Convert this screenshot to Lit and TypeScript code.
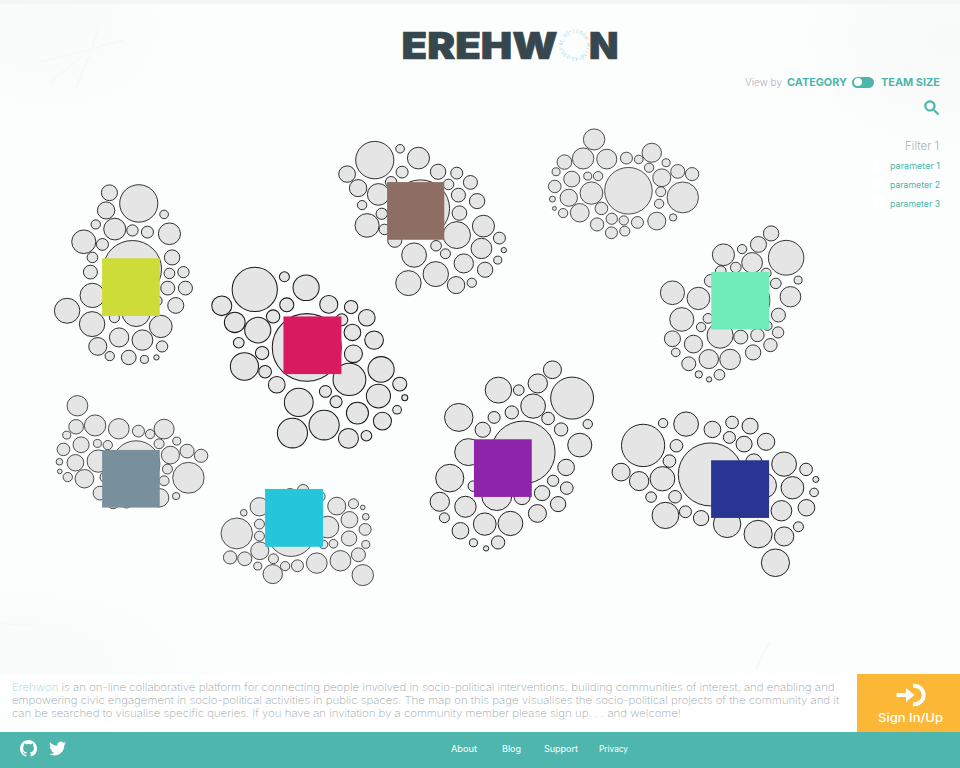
import { LitElement, html, svg, css } from "lit";
import { customElement, property } from "lit/decorators.js";

type Bubble = [number, number, number];
interface Cluster {
  x: number;
  y: number;
  stroke: number;
  square?: { x: number; y: number; w: number; h: number; color: string };
  bubbles: Bubble[];
}

// Bubble coordinates are on a grid three times finer than the page.
const clusters: Cluster[] = [
  {
    x: 40, y: 170, stroke: 2.7,
    square: { x: 186, y: 264.5, w: 173, h: 173, color: "#cddc39" },
    bubbles: [[208,68,24],[296,100,57],[198,121,26],[372,133,13],[167,163,14],[224,177,33],[277,181,17],[322,186,18],[388,191,33],[131,215,36],[187,223,18],[277,297,87],[157,262,16],[396,262,23],[151,306,21],[388,310,16],[430,306,17],[157,376,37],[383,354,21],[436,354,21],[81,422,38],[350,392,16],[407,406,24],[156,462,38],[223,443,15],[288,428,42],[362,469,34],[173,529,27],[237,502,29],[307,510,31],[366,529,17],[209,558,14],[266,562,22],[313,568,12],[349,562,8]],
  },
  {
    x: 200, y: 255, stroke: 3.1,
    square: { x: 250, y: 184, w: 174, h: 173, color: "#d81b60" },
    bubbles: [[164,103,67.5],[253,65,15],[318,98,39],[65,152,30],[260,149,21],[386,148,27],[453,156,20],[500,188,25],[104,202,31],[219,184,20],[425,194,18],[173,225,39],[457,232,25],[522,255,28],[116,263,16],[320,277,103],[186,294,20],[460,296,27],[133,334,42],[195,350,19],[448,373,49],[543,343,39],[230,389,25],[376,409,18],[599,387,21],[296,442,43],[408,440,18],[535,423,36],[614,428,9],[591,464,13],[472,474,33],[547,498,27],[372,510,45],[277,534,45],[445,550,30],[499,542,16]],
  },
  {
    x: 330, y: 120, stroke: 2.7,
    square: { x: 171, y: 186, w: 171.5, h: 173, color: "#8d6e63" },
    bubbles: [[134,120,57],[210,86,13],[265,114,33],[51,162,25],[216,156,18],[324,155,23],[380,159,18],[421,187,21],[84,204,26],[183,186,17],[355,193,16],[145,223,33],[385,225,21],[441,243,23],[96,255,14],[271,265,87],[155,281,17],[388,279,22],[111,316,36],[163,328,16],[380,345,41],[460,318,33],[194,361,21],[318,377,16],[508,354,18],[252,405,37],[346,401,15],[454,385,31],[521,390,8],[503,420,12],[401,430,29],[465,449,23],[317,462,38],[235,489,38],[378,495,26],[425,488,14]],
  },
  {
    x: 535, y: 120, stroke: 2.3,
    bubbles: [[177,58,32],[144,115,32],[215,117,30],[88,126,22],[63,155,12],[274,114,18],[311,118,13],[350,98,29],[342,143,14],[393,128,12],[380,173,27],[428,154,21],[471,162,20],[110,177,24],[158,168,12],[189,168,14],[59,199,19],[52,237,9],[101,233,26],[169,219,34],[280,212,71],[377,215,15],[443,232,47],[372,251,14],[199,265,19],[134,278,28],[84,279,14],[58,265,6],[230,296,17],[266,301,14],[307,307,18],[186,313,20],[365,303,27],[414,292,11],[229,338,18],[269,333,15]],
  },
  {
    x: 650, y: 215, stroke: 2.6,
    square: { x: 183.5, y: 170.5, w: 174, h: 172.5, color: "#6eebb8" },
    bubbles: [[363,55,23],[325,88,24],[220,119,33],[276,102,14],[306,143,31],[408,128,53],[257,157,16],[212,168,16],[348,174,15],[444,195,12],[377,205,16],[182,197,19],[67,233,36],[145,250,34],[421,245,31],[280,256,79],[95,313,36],[174,310,15],[153,336,14],[385,300,21],[352,332,14],[384,352,17],[67,371,24],[210,361,39],[272,366,21],[322,360,20],[130,387,27],[361,390,20],[77,412,13],[309,412,23],[176,432,29],[240,433,31],[116,446,21],[146,478,11],[177,493,8],[208,479,16]],
  },
  {
    x: 40, y: 385, stroke: 2.3,
    square: { x: 186, y: 194.5, w: 173, h: 173, color: "#78909c" },
    bubbles: [[112,62,31],[108,125,22],[165,121,32],[236,131,31],[80,150,12],[295,138,18],[330,147,14],[372,132,30],[410,168,12],[123,179,24],[172,175,12],[203,180,14],[357,176,15],[70,193,19],[288,237,71],[391,210,27],[441,198,21],[483,212,20],[58,230,10],[106,233,25],[175,228,34],[382,252,15],[59,259,7],[83,276,14],[133,281,28],[445,278,47],[199,276,19],[372,287,15],[180,324,21],[358,338,28],[408,333,11],[219,353,18],[259,354,15]],
  },
  {
    x: 210, y: 475, stroke: 2.3,
    square: { x: 165, y: 41.5, w: 174, h: 173.5, color: "#26c6da" },
    bubbles: [[279,45,17],[148,95,28],[101,113,10],[380,93,27],[430,86,15],[458,97,7],[329,64,16],[240,58,18],[353,156,33],[418,134,25],[467,125,10],[80,175,47],[148,147,15],[148,183,15],[465,163,18],[417,190,23],[149,227,27],[243,176,69],[340,208,13],[370,206,13],[467,208,12],[60,247,20],[104,251,21],[143,273,12],[190,251,15],[225,273,14],[262,272,18],[320,264,31],[391,257,31],[445,239,21],[188,297,29],[458,300,32]],
  },
  {
    x: 420, y: 350, stroke: 2.9,
    square: { x: 161.5, y: 267.5, w: 173.5, h: 173, color: "#8e24aa" },
    bubbles: [[397,59,27],[353,100,29],[235,120,39.5],[296,120,16],[339,168,37],[456,144,64],[116,202,42.5],[222,202,18],[275,187,20],[384,205,19],[503,222,14],[423,238,20],[188,239,23],[309,307,95.5],[479,285,36],[145,306,41],[438,352,25],[89,384,42],[399,392,17],[440,414,19],[366,429,23],[160,408,16],[59,455,29],[136,470,32],[230,437,45],[306,440,24],[414,462,23],[352,490,27],[73,503,15],[194,522,34],[271,520,37],[121,542,25],[160,578,12],[198,595,8],[234,577,20]],
  },
  {
    x: 605, y: 400, stroke: 2.9,
    square: { x: 318, y: 180.5, w: 174, h: 173, color: "#283593" },
    bubbles: [[114,136,64.5],[174,69,14],[243,72,37],[322,88,25],[381,67,19],[435,78,24],[483,125,26],[373,112,18],[417,132,24],[214,137,19],[193,183,19],[48,216,27],[102,243,29],[172,236,37],[316,223,96],[446,185,24],[537,192,37],[603,208,19],[632,238,9],[562,263,34],[475,256,39],[627,277,13],[138,291,16],[210,290,19],[529,332,31],[604,323,25],[181,346,40],[241,335,18],[288,354,23],[366,372,41],[459,402,42],[537,409,29],[580,380,15],[511,488,42]],
  },
];

/** One line of text set to an exact measure. */
@customElement("fit-text")
export class FitText extends LitElement {
  @property() text = "";
  @property() lead = "";
  @property({ type: Number }) measure = 50;
  @property({ type: Number }) size = 10;

  static styles = css`
    :host { display: block; line-height: 0; flex: none; }
    svg { display: block; overflow: visible; }
    text { fill: currentColor; font-family: inherit; font-weight: inherit; }
    .lead { fill: #9fdccf; }
  `;

  render() {
    return html`<svg width=${this.measure} height="16">
      ${svg`<text x="0" y="12" font-size=${this.size} textLength=${this.measure} lengthAdjust="spacingAndGlyphs"><tspan class="lead">${this.lead}</tspan>${this.text}</text>`}
    </svg>`;
  }
}

@customElement("bubble-map")
export class BubbleMap extends LitElement {
  static styles = css`
    :host { display: block; }
    svg { display: block; }
    ellipse { fill: #e5e5e5; stroke: #1a1a1a; }
    .scratch { fill: none; stroke: #f5f7f8; stroke-width: 1.5; }
  `;

  private drawCluster(c: Cluster) {
    const s = c.square;
    return svg`<g transform="translate(${c.x + 0.1} ${c.y + 0.1}) scale(0.33333)" stroke-width=${c.stroke}>
      ${c.bubbles.map(([cx, cy, r]) => svg`<ellipse cx=${cx} cy=${cy} rx=${r * 1.005} ry=${r * 0.985}></ellipse>`)}
      ${s ? svg`<rect x=${s.x} y=${s.y} width=${s.w} height=${s.h} fill=${s.color} stroke="none"></rect>` : ""}
    </g>`;
  }

  render() {
    return html`<svg width="960" height="674" viewBox="0 0 960 674">
      <path class="scratch" d="M98 30Q90 55 76 88M40 62Q80 52 124 40M50 82Q75 62 90 50M0 622Q20 628 34 624M770 642Q762 654 756 670"></path>
      ${clusters.map((c) => this.drawCluster(c))}
    </svg>`;
  }
}

@customElement("app-root")
export class AppRoot extends LitElement {
  static styles = css`
    :host {
      display: flex;
      flex-direction: column;
      box-sizing: border-box;
      width: 960px;
      height: 768px;
      overflow: hidden;
      font-family: Inter, "Open Sans", sans-serif;
      background:
        linear-gradient(#f4f5f5 0 3px, transparent 5px),
        radial-gradient(130px 90px at 50px 30px, #f9fbfb, transparent),
        radial-gradient(160px 120px at 950px 40px, #f8fafa, transparent),
        radial-gradient(200px 80px at 10px 660px, #f9fbfb, transparent),
        #fcfefd;
    }
    .stage { flex: 1; display: grid; min-height: 0; }
    .stage > * { grid-area: 1 / 1; }
    .logo { justify-self: center; margin: 26px 0 0 120px; width: 280px; height: 40px; overflow: visible; }
    .logo .name { font-weight: 900; font-size: 37.3px; fill: #37474f; stroke: #37474f; stroke-width: 0.7; }
    .logo .ring { font-size: 5px; fill: #a9dcea; }
    .tools {
      justify-self: end;
      display: flex;
      flex-direction: column;
      align-items: flex-end;
      padding: 74px 20px 0 0;
      color: #4db6ac;
    }
    .view { display: flex; align-items: center; height: 16px; }
    .view .muted { margin-right: 5px; font-weight: 300; }
    .view .strong { font-weight: 700; }
    .muted { color: #acb0bf; }
    .toggle {
      box-sizing: border-box;
      width: 22px; height: 11px;
      margin: 0 7px 0 5px;
      padding: 1.5px;
      border-radius: 6px;
      background: #4db6ac;
    }
    .knob { width: 8px; height: 8px; border-radius: 50%; background: #fff; }
    .search { width: 20px; height: 20px; margin: 8px -1.5px 0 0; }
    .filter { margin-top: 20px; margin-right: 1px; font-weight: 300; }
    .params { display: flex; flex-direction: column; gap: 3px; margin: 3px 0 0 0; }
    .param { display: flex; gap: 6px; align-items: center; }
    .box { width: 11px; height: 12px; background: #fff; }
    .about { display: flex; height: 58px; flex: none; }
    .copy { flex: 1; padding: 5px 0 0 12px; background: rgba(255, 255, 255, 0.6); color: #a0a8ad; font-weight: 200; }
    .copy fit-text { height: 13px; }
    .sign {
      width: 103px;
      display: flex;
      flex-direction: column;
      align-items: center;
      background: #fbb735;
      color: #fff;
      font-weight: 500;
    }
    .sign svg { width: 30px; height: 24px; margin: 9px 0 3px 4px; }
    .sign fit-text { margin-left: 4px; }
    .sign fit-text svg { margin: 0; }
    footer { display: flex; height: 36px; flex: none; background: #4eb6ac; color: #fff; }
    .social { display: flex; flex: none; gap: 12px; padding: 8px 0 0 20px; width: 451px; box-sizing: border-box; }
    .social svg { width: 17px; height: 17px; }
    .links { display: flex; padding-top: 8px; font-weight: 400; }
    .links fit-text { margin-right: 25px; }
    .links fit-text.support { margin-right: 21px; }
    .links fit-text.blog { margin-right: 23px; }
  `;

  render() {
    return html`
      <div class="stage">
        <bubble-map></bubble-map>
        <svg class="logo" viewBox="400 26 280 40">
          <defs><path id="o" d="M562.8 45.200a12 12 0 1 1 24 0a12 12 0 1 1 -24 0"></path></defs>
          <text class="name" x="401.5" y="58.7" textLength="156" lengthAdjust="spacingAndGlyphs">EREHW</text>
          <text class="name" x="589" y="58.7" textLength="29.500" lengthAdjust="spacingAndGlyphs">N</text>
          <text class="ring"><textPath href="#o" textLength="74">M, 90°7.0008′ W) (38°43.0007′</textPath></text>
        </svg>
        <div class="tools">
          <div class="view">
            <fit-text class="muted" text="View by" measure="37" size="10"></fit-text>
            <fit-text class="strong" text="CATEGORY" measure="60" size="11"></fit-text>
            <div class="toggle"><div class="knob"></div></div>
            <fit-text class="strong" text="TEAM SIZE" measure="59" size="11"></fit-text>
          </div>
          <svg class="search" viewBox="0 0 24 24"><path fill="currentColor" stroke="currentColor" stroke-width="0.7" d="M15.5 14h-.79l-.28-.27A6.471 6.471 0 0 0 16 9.5 6.5 6.5 0 1 0 9.5 16c1.61 0 3.09-.59 4.23-1.57l.27.28v.79l5 4.99L20.49 19l-4.99-5zm-6 0C7.01 14 5 11.99 5 9.500S7.010 5 9.500 5 14 7.010 14 9.500 11.990 14 9.500 14z"></path></svg>
          <fit-text class="filter muted" text="Filter 1" measure="34" size="11"></fit-text>
          <div class="params">
            ${[1, 2, 3].map((n) => html`<div class="param"><span class="box"></span><fit-text text="parameter ${n}" measure="50" size="8.4"></fit-text></div>`)}
          </div>
        </div>
      </div>
      <div class="about">
        <div class="copy">
          <fit-text lead="Erehwon" text=" is an on-line collaborative platform for connecting people involved in socio-political interventions, building communities of interest, and enabling and" measure="822.5" size="10.6"></fit-text>
          <fit-text text="empowering civic engagement in socio-political activities in public spaces. The map on this page visualises the socio-political projects of the community and it" measure="827" size="10.6"></fit-text>
          <fit-text text="can be searched to visualise specific queries. If you have an invitation by a community member please sign up. . . and welcome!" measure="669" size="10.6"></fit-text>
        </div>
        <div class="sign">
          <svg viewBox="0 0 30 24"><path d="M0.500 12H12" stroke="#fff" stroke-width="4" fill="none"></path><path d="M10 5L18.500 12L10 19Z" fill="#fff"></path><path d="M17 2.800A9.300 9.300 0 1 1 17 21.200" stroke="#fff" stroke-width="4" fill="none"></path></svg>
          <fit-text text="Sign In/Up" measure="65" size="11.5"></fit-text>
        </div>
      </div>
      <footer>
        <div class="social">
          <svg viewBox="0 0 16 16"><path fill="#fff" d="M8 0C3.58 0 0 3.58 0 8c0 3.54 2.29 6.53 5.47 7.59.4.07.55-.17.55-.38 0-.19-.01-.82-.01-1.490-2.010.370-2.530-.490-2.690-.940-.090-.230-.480-.940-.820-1.130-.280-.150-.680-.520-.010-.530.630-.010 1.080.580 1.230.820.720 1.210 1.870.870 2.330.660.070-.520.280-.870.510-1.070-1.780-.200-3.640-.890-3.640-3.950 0-.870.310-1.590.820-2.150-.080-.200-.360-1.020.080-2.120 0 0 .670-.210 2.200.820.640-.180 1.320-.270 2-.270s1.360.090 2 .270c1.530-1.040 2.200-.820 2.200-.820.440 1.100.160 1.920.080 2.120.510.560.820 1.270.820 2.150 0 3.070-1.870 3.750-3.650 3.950.290.250.540.730.540 1.480 0 1.070-.010 1.930-.010 2.200 0 .210.150.460.550.380A8.010 8.010 0 0 0 16 8c0-4.420-3.580-8-8-8z"></path></svg>
          <svg viewBox="0 0 24 24"><path fill="#fff" d="M23.950 4.570a10 10 0 0 1-2.820.770 4.960 4.960 0 0 0 2.160-2.720c-.950.550-2 .950-3.130 1.180a4.920 4.920 0 0 0-8.380 4.480C7.690 8.090 4.070 6.130 1.640 3.160a4.820 4.820 0 0 0-.670 2.470c0 1.710.870 3.210 2.190 4.100a4.900 4.900 0 0 1-2.230-.620v.060a4.920 4.920 0 0 0 3.950 4.830 5 5 0 0 1-2.210.080 4.940 4.940 0 0 0 4.600 3.420A9.870 9.870 0 0 1 0 19.540a13.990 13.990 0 0 0 7.550 2.210c9.050 0 14-7.500 14-13.980 0-.210 0-.420-.020-.630a9.940 9.940 0 0 0 2.460-2.550z"></path></svg>
        </div>
        <nav class="links">
          <fit-text text="About" measure="26" size="8.800"></fit-text>
          <fit-text class="blog" text="Blog" measure="19" size="8.800"></fit-text>
          <fit-text class="support" text="Support" measure="34" size="8.800"></fit-text>
          <fit-text text="Privacy" measure="29" size="8.800"></fit-text>
        </nav>
      </footer>
    `;
  }
}
